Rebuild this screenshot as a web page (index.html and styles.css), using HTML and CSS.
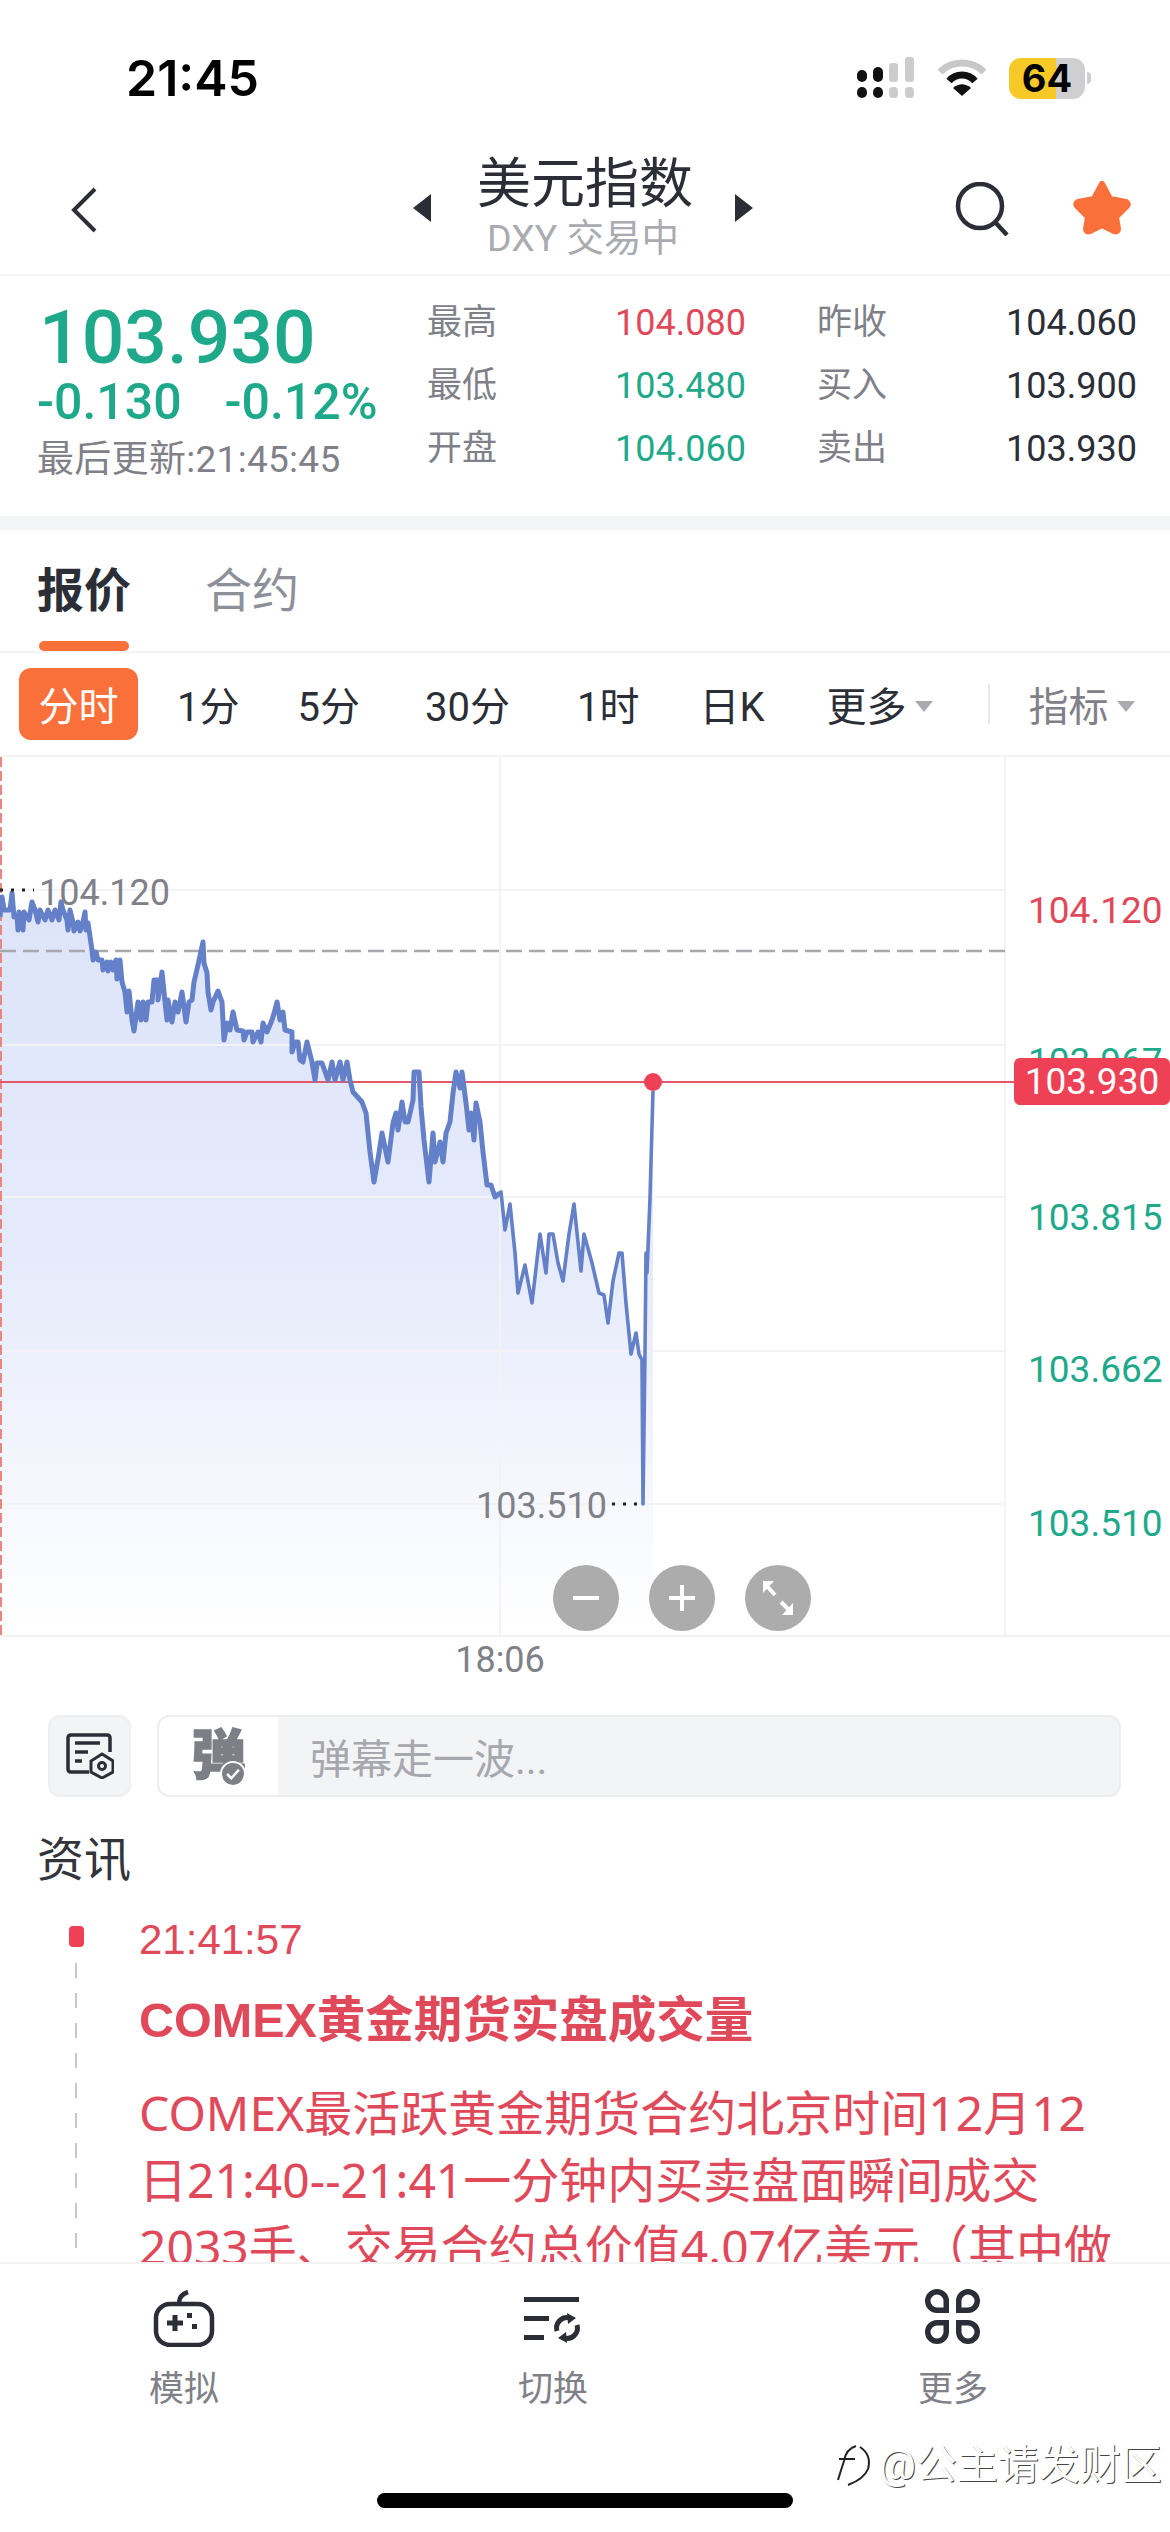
FILE: index.html
```html
<!DOCTYPE html>
<html lang="zh-CN">
<head>
    <meta charset="UTF-8">
    <title>美元指数</title>
    <link rel="stylesheet" href="styles.css">
</head>
<body>

<div class="page">
    <div class="status-bar">
        <span class="clock">21:45</span>
        <div class="status-icons">
            <svg class="signal" width="58" height="42" viewBox="0 0 58 42">
                <rect x="0" y="13" width="10" height="12" rx="5" fill="#111"/>
                <rect x="16" y="10" width="10" height="15" rx="5" fill="#111"/>
                <rect x="0" y="30" width="10" height="11" rx="5" fill="#111"/>
                <rect x="16" y="30" width="10" height="11" rx="5" fill="#111"/>
                <rect x="32" y="6" width="9" height="19" rx="3" fill="#ccc"/>
                <rect x="48" y="0" width="9" height="25" rx="3" fill="#ccc"/>
                <rect x="32" y="30" width="9" height="11" rx="4" fill="#ccc"/>
                <rect x="48" y="30" width="9" height="11" rx="4" fill="#ccc"/>
            </svg>
            <svg class="wifi" width="50" height="38" viewBox="0 0 50 38">
                <path d="M3 13 C15 1 35 1 47 13" fill="none" stroke="#c8c8c8" stroke-width="7"/>
                <path d="M12 22 C19 14 31 14 38 22" fill="none" stroke="#111" stroke-width="7"/>
                <path d="M16 29 C22 24 28 24 34 29 L25 37 Z" fill="#111"/>
            </svg>
            <div class="battery">
                <div class="battery-body"><span>64</span></div>
                <div class="battery-nub"></div>
            </div>
        </div>
    </div>

    <div class="nav-bar">
        <svg class="back" width="28" height="46" viewBox="0 0 28 46"><path d="M25 2 L4 23 L25 44" fill="none" stroke="#2b2e36" stroke-width="4"/></svg>
        <div class="symbol">
            <svg width="18" height="28" viewBox="0 0 18 28"><path d="M18 0 V28 L0 14 Z" fill="#2b2e36"/></svg>
            <div class="symbol-name">
                <div class="symbol-title">美元指数</div>
                <div class="symbol-sub">DXY 交易中</div>
            </div>
            <svg width="18" height="28" viewBox="0 0 18 28"><path d="M0 0 V28 L18 14 Z" fill="#2b2e36"/></svg>
        </div>
        <svg class="search" width="54" height="54" viewBox="0 0 54 54">
            <circle cx="25" cy="24" r="22" fill="none" stroke="#2b2e36" stroke-width="4.5"/>
            <path d="M40 40 L52 53" stroke="#2b2e36" stroke-width="4.5"/>
        </svg>
        <svg class="star" width="60" height="56" viewBox="0 0 60 56">
            <path d="M30 5 L38 20 L54 23 Q57 25 55 27 L44 38 L46 50 Q46 53 42 52 L30 46 L18 52 Q14 53 14 50 L16 38 L5 27 Q3 25 6 23 L22 20 Z" fill="#f9703b" stroke="#f9703b" stroke-width="6" stroke-linejoin="round"/>
        </svg>
    </div>

    <div class="quote">
        <div class="quote-main">
            <div class="price">103.930</div>
            <div class="change"><span>-0.130</span><span>-0.12%</span></div>
            <div class="updated">最后更新:21:45:45</div>
        </div>
        <div class="quote-table">
            <span class="cell-label">最高</span><span class="cell-value up">104.080</span>
            <span class="cell-label">昨收</span><span class="cell-value">104.060</span>
            <span class="cell-label">最低</span><span class="cell-value down">103.480</span>
            <span class="cell-label">买入</span><span class="cell-value">103.900</span>
            <span class="cell-label">开盘</span><span class="cell-value down">104.060</span>
            <span class="cell-label">卖出</span><span class="cell-value">103.930</span>
        </div>
    </div>

    <div class="tabs">
        <div class="tab active">报价</div>
        <div class="tab">合约</div>
    </div>

    <div class="periods">
        <span class="period active">分时</span>
        <span class="period p-1">1分</span>
        <span class="period p-2">5分</span>
        <span class="period p-3">30分</span>
        <span class="period p-4">1时</span>
        <span class="period p-5">日K</span>
        <span class="period p-6">更多<i class="caret"></i></span>
        <span class="period-sep"></span>
        <span class="period muted">指标<i class="caret"></i></span>
    </div>

    <div class="chart">
        <svg class="chart-svg" width="1170" height="880" viewBox="0 757 1170 880">
            <defs>
                <linearGradient id="areaFill" x1="0" y1="0" x2="0" y2="1">
                    <stop offset="0" stop-color="#dde4f9"/>
                    <stop offset="0.5" stop-color="#e6ebfb"/>
                    <stop offset="1" stop-color="#ffffff"/>
                </linearGradient>
            </defs>
            <!-- area under the line, same points as the line below -->
            <path fill="url(#areaFill)" d="M0 917 L2 897 L4 910 L7 910 L10 910 L12 893 L14 917 L17 915 L18 930 L19 912 L23 930 L24 912 L29 920 L32 902 L35 910 L38 922 L40 910 L45 920 L48 910 L52 920 L55 910 L59 920 L61 902 L63 910 L67 920 L68 930 L70 910 L73 922 L74 931 L78 922 L80 931 L83 922 L85 912 L86 930 L88 923 L92 950 L93 960 L96 952 L98 960 L102 960 L103 970 L107 962 L108 971 L111 962 L113 970 L116 960 L117 979 L120 960 L122 982 L125 992 L127 1012 L129 991 L132 1020 L134 1031 L138 1002 L141 1020 L143 1002 L146 1020 L148 1002 L152 1002 L154 980 L158 980 L158 1000 L162 972 L165 1002 L167 1020 L168 1000 L172 1022 L175 1002 L178 1012 L182 992 L186 1022 L189 1002 L192 1000 L194 982 L198 965 L203 942 L204 963 L207 973 L208 992 L211 1010 L213 1002 L218 991 L222 1002 L224 1040 L227 1023 L230 1030 L233 1012 L237 1030 L243 1031 L244 1040 L247 1032 L252 1032 L253 1042 L258 1032 L261 1042 L263 1023 L267 1032 L272 1020 L275 1010 L277 1002 L280 1020 L283 1012 L285 1030 L292 1032 L292 1052 L295 1042 L298 1042 L300 1060 L303 1062 L307 1042 L312 1062 L315 1080 L317 1063 L322 1063 L328 1080 L332 1062 L335 1080 L340 1062 L343 1080 L347 1062 L350 1080 L353 1092 L362 1102 L366 1113 L370 1152 L374 1182 L379 1153 L382 1133 L388 1162 L393 1123 L396 1113 L398 1130 L402 1102 L405 1122 L408 1122 L413 1100 L414 1072 L419 1072 L421 1107 L424 1140 L429 1182 L433 1133 L435 1162 L440 1142 L443 1162 L446 1133 L450 1122 L453 1093 L456 1072 L460 1088 L462 1072 L466 1103 L469 1130 L471 1113 L474 1140 L476 1103 L480 1122 L483 1152 L487 1185 L491 1185 L495 1197 L500 1193 L501 1192 L505 1230 L510 1204 L515 1253 L518 1293 L525 1265 L532 1303 L540 1234 L546 1273 L549 1234 L553 1234 L558 1263 L563 1281 L569 1234 L574 1204 L581 1271 L584 1234 L592 1263 L599 1293 L604 1295 L608 1323 L613 1281 L619 1253 L622 1253 L626 1303 L631 1354 L636 1333 L639 1354 L642 1360 L645 1352 L646 1253 L647 1273 L650 1198 L653 1091 V1636 H0 Z"/>

            <!-- grid -->
            <g stroke="#f3f3f5" stroke-width="2">
                <path d="M0 890 H1005 M0 1045 H1005 M0 1197 H1005 M0 1351 H1005 M0 1504 H1005 M0 1636 H1170"/>
                <path d="M500 757 V1636 M1005 757 V1636"/>
            </g>
            <path d="M1 757 V1636" stroke="#e8867f" stroke-width="2" stroke-dasharray="10 4"/>
            <path d="M0 951 H1005" stroke="#a9a9ad" stroke-width="2.5" stroke-dasharray="16 7"/>
            <path d="M0 1082 H1015" stroke="#e4566a" stroke-width="2"/>

            <!-- price line -->
            <path fill="none" stroke="#6480c8" stroke-width="5" stroke-linejoin="round" d="M0 917 L2 897 L4 910 L7 910 L10 910 L12 893 L14 917 L17 915 L18 930 L19 912 L23 930 L24 912 L29 920 L32 902 L35 910 L38 922 L40 910 L45 920 L48 910 L52 920 L55 910 L59 920 L61 902 L63 910 L67 920 L68 930 L70 910 L73 922 L74 931 L78 922 L80 931 L83 922 L85 912 L86 930 L88 923 L92 950 L93 960 L96 952 L98 960 L102 960 L103 970 L107 962 L108 971 L111 962 L113 970 L116 960 L117 979 L120 960 L122 982 L125 992 L127 1012 L129 991 L132 1020 L134 1031 L138 1002 L141 1020 L143 1002 L146 1020 L148 1002 L152 1002 L154 980 L158 980 L158 1000 L162 972 L165 1002 L167 1020 L168 1000 L172 1022 L175 1002 L178 1012 L182 992 L186 1022 L189 1002 L192 1000 L194 982 L198 965 L203 942 L204 963 L207 973 L208 992 L211 1010 L213 1002 L218 991 L222 1002 L224 1040 L227 1023 L230 1030 L233 1012 L237 1030 L243 1031 L244 1040 L247 1032 L252 1032 L253 1042 L258 1032 L261 1042 L263 1023 L267 1032 L272 1020 L275 1010 L277 1002 L280 1020 L283 1012 L285 1030 L292 1032 L292 1052 L295 1042 L298 1042 L300 1060 L303 1062 L307 1042 L312 1062 L315 1080 L317 1063 L322 1063 L328 1080 L332 1062 L335 1080 L340 1062 L343 1080 L347 1062 L350 1080 L353 1092 L362 1102 L366 1113 L370 1152 L374 1182 L379 1153 L382 1133 L388 1162 L393 1123 L396 1113 L398 1130 L402 1102 L405 1122 L408 1122 L413 1100 L414 1072 L419 1072 L421 1107 L424 1140 L429 1182 L433 1133 L435 1162 L440 1142 L443 1162 L446 1133 L450 1122 L453 1093 L456 1072 L460 1088 L462 1072 L466 1103 L469 1130 L471 1113 L474 1140 L476 1103 L480 1122 L483 1152 L487 1185 L491 1185 L495 1197 L500 1193"/>
            <path fill="none" stroke="#6480c8" stroke-width="3.6" stroke-linejoin="round" d="M500 1193 L501 1192 L505 1230 L510 1204 L515 1253 L518 1293 L525 1265 L532 1303 L540 1234 L546 1273 L549 1234 L553 1234 L558 1263 L563 1281 L569 1234 L574 1204 L581 1271 L584 1234 L592 1263 L599 1293 L604 1295 L608 1323 L613 1281 L619 1253 L622 1253 L626 1303 L631 1354 L636 1333 L639 1354 L642 1360 L643 1504 L645 1352 L646 1253 L647 1273 L650 1198 L653 1091"/>

            <circle cx="653" cy="1082" r="9" fill="#ee4156"/>
            <path d="M0 890 H34 M612 1504 H645" stroke="#222" stroke-width="3" stroke-dasharray="3 8"/>
        </svg>

        <span class="mark mark-high">104.120</span>
        <span class="mark mark-low">103.510</span>

        <span class="axis axis-1 up">104.120</span>
        <span class="axis axis-2 down">103.967</span>
        <span class="axis axis-3 down">103.815</span>
        <span class="axis axis-4 down">103.662</span>
        <span class="axis axis-5 down">103.510</span>
        <span class="price-tag">103.930</span>

        <div class="zoom-btns">
            <span class="zoom-btn"><svg width="30" height="30" viewBox="0 0 30 30"><path d="M2 15 H28" stroke="#fff" stroke-width="4"/></svg></span>
            <span class="zoom-btn"><svg width="30" height="30" viewBox="0 0 30 30"><path d="M2 15 H28 M15 2 V28" stroke="#fff" stroke-width="4"/></svg></span>
            <span class="zoom-btn"><svg width="34" height="38" viewBox="0 0 34 38"><path d="M5 6 L14 16 M20 23 L29 32" stroke="#fff" stroke-width="4"/><path d="M2 2 H13 L2 14 Z M32 36 H21 L32 24 Z" fill="#fff"/></svg></span>
        </div>
    </div>

    <div class="time-axis">18:06</div>

    <div class="danmu">
        <div class="danmu-set">
            <svg width="48" height="46" viewBox="0 0 48 46" fill="none" stroke="#2b2e36" stroke-width="3.5">
                <path d="M23 39 H5 Q2 39 2 36 V5 Q2 2 5 2 H41 Q44 2 44 5 V19"/>
                <path d="M9 10 H34 M9 19 H22 M9 28 H16"/>
                <path d="M36 21 L47 28 V39 L36 45 L25 39 V28 Z" stroke-width="3"/>
                <circle cx="36" cy="33" r="3.5" stroke-width="3"/>
            </svg>
        </div>
        <div class="danmu-input">
            <div class="danmu-switch">
                <span class="danmu-char">弹</span>
                <svg class="danmu-check" width="26" height="26" viewBox="0 0 26 26"><circle cx="13" cy="13" r="13" fill="#7d7f86"/><path d="M6 13 L11 18 L20 8" fill="none" stroke="#fff" stroke-width="3"/></svg>
            </div>
            <span class="danmu-hint">弹幕走一波...</span>
        </div>
    </div>

    <div class="news">
        <div class="news-head">资讯</div>
        <div class="news-item">
            <div class="timeline">
                <span class="timeline-dot"></span>
                <span class="timeline-line"></span>
            </div>
            <div class="news-body">
                <div class="news-time">21:41:57</div>
                <div class="news-title">COMEX黄金期货实盘成交量</div>
                <p class="news-text">COMEX最活跃黄金期货合约北京时间12月12<br>日21:40--21:41一分钟内买卖盘面瞬间成交<br>2033手、交易合约总价值4.07亿美元（其中做</p>
            </div>
        </div>
    </div>

    <div class="bottom-bar">
        <div class="bottom-item">
            <svg width="64" height="58" viewBox="0 0 64 58" fill="none" stroke="#2b2e36">
                <rect x="4" y="15" width="56" height="41" rx="14" stroke-width="4.5"/>
                <path d="M27 14 Q27 6 36 3" stroke-width="4.5"/>
                <path d="M15 34 H31 M23 26 V42" stroke-width="5"/>
                <path d="M35 26.500 H40 M40 37.500 H45" stroke-width="5"/>
            </svg>
            <span>模拟</span>
        </div>
        <div class="bottom-item">
            <svg width="60" height="58" viewBox="0 0 60 58" fill="none" stroke="#2b2e36">
                <path d="M1 10.500 H56 M1 29.500 H26 M1 48.500 H21" stroke-width="5"/>
                <path d="M34 42 A10.500 10.500 0 0 1 46 28.700" stroke-width="5"/>
                <path d="M54 36 A10.500 10.500 0 0 1 42 49.300" stroke-width="5"/>
                <path d="M44 24 L53 29 L45 35 Z M44 54 L35 49 L43 43 Z" fill="#2b2e36" stroke="none"/>
            </svg>
            <span>切换</span>
        </div>
        <div class="bottom-item">
            <svg width="56" height="58" viewBox="0 0 56 58" fill="none" stroke="#2b2e36" stroke-width="5.500">
                <path d="M21.250 21.250 H12 A9.250 9.250 0 1 1 21.250 12 Z"/>
                <path d="M33.750 21.250 H43 A9.250 9.250 0 1 0 33.750 12 Z"/>
                <path d="M21.250 33.750 H12 A9.250 9.250 0 1 0 21.250 43 Z"/>
                <path d="M33.750 33.750 H43 A9.250 9.250 0 1 1 33.750 43 Z"/>
            </svg>
            <span>更多</span>
        </div>
    </div>

    <div class="watermark">
        <svg width="38" height="44" viewBox="0 0 38 44" fill="none" stroke="#222" stroke-width="2"><path d="M2 37 Q6 24 8 18 Q10 6 20 3 M3 16 H19 M24 4 Q36 12 32 26 Q28 36 12 42"/></svg>
        <span>@公主请发财区</span>
    </div>

    <div class="home-indicator"></div>
</div>

</body>
</html>
```

FILE: styles.css
```css
* {
    box-sizing: border-box;
}
html, body {
    margin: 0;
    padding: 0;
}
body {
    background-color: #fff;
    font-family: "Roboto", "Noto Sans CJK SC", sans-serif;
    color: #2b2e36;
}
.page {
    position: relative;
    width: 1170px;
    height: 2532px;
    overflow: hidden;
    display: flex;
    flex-direction: column;
}

/* status bar */
.status-bar {
    height: 140px;
    flex: none;
    display: flex;
    justify-content: space-between;
    align-items: flex-start;
    padding: 50px 79px 0 126px;
}
.clock {
    font-family: "Inter", sans-serif;
    font-size: 50px;
    line-height: 56px;
    font-weight: 600;
    color: #000;
}
.status-icons {
    display: flex;
    align-items: center;
    gap: 22px;
    margin-top: 7px;
}
.battery {
    display: flex;
    align-items: center;
    gap: 2px;
}
.battery-body {
    width: 76px;
    height: 41px;
    border-radius: 12px;
    background: linear-gradient(90deg, #f6c926 62%, #cfcfd1 62%);
    text-align: center;
    font-family: "Inter", sans-serif;
    font-weight: 700;
    font-size: 38px;
    line-height: 41px;
    color: #000;
}
.battery-nub {
    width: 4px;
    height: 12px;
    border-radius: 0 4px 4px 0;
    background-color: #cfcfd1;
}

/* title row */
.nav-bar {
    position: relative;
    height: 136px;
    flex: none;
    border-bottom: 2px solid #f3f4f6;
    display: flex;
    align-items: flex-start;
}
.back {
    margin: 47px 0 0 70px;
}
.symbol {
    margin-left: 315px;
    display: flex;
    align-items: flex-start;
    gap: 46px;
}
.symbol svg {
    margin-top: 54px;
}
.symbol-name {
    text-align: center;
    width: 212px;
}
.symbol-title {
    font-size: 54px;
    line-height: 66px;
    margin-top: 12px;
    color: #2b2e36;
    white-space: nowrap;
}
.symbol-sub {
    font-size: 37.5px;
    line-height: 42px;
    margin-top: -1px;
    color: #aaabb1;
    white-space: nowrap;
}
.search {
    margin: 42px 0 0 202px;
}
.star {
    margin: 39px 0 0 63px;
}

/* quote block */
.quote {
    height: 254px;
    flex: none;
    display: flex;
    padding: 0 37px;
    border-bottom: 14px solid #f4f5f7;
}
.quote-main {
    width: 390px;
    flex: none;
}
.price {
    font-size: 75px;
    line-height: 80px;
    font-weight: 500;
    color: #1fa98b;
    margin-top: 21px;
    margin-left: 2px;
}
.change {
    display: flex;
    gap: 43px;
    font-size: 50px;
    line-height: 50px;
    font-weight: 500;
    color: #1fa98b;
}
.updated {
    font-size: 37px;
    line-height: 44px;
    letter-spacing: 0.3px;
    color: #808088;
    margin-top: 11px;
    white-space: nowrap;
}
.quote-table {
    flex: 1;
    display: grid;
    grid-template-columns: 188px 202px 189px 1fr;
    grid-auto-rows: 63px;
    padding-top: 15px;
    align-items: center;
}
.cell-label {
    font-size: 35px;
    line-height: 42px;
    color: #808088;
}
.cell-value {
    font-size: 36px;
    line-height: 42px;
    color: #2b2e36;
}
.up {
    color: #e0495a;
}
.down {
    color: #1fa98b;
}

/* tabs */
.tabs {
    height: 123px;
    flex: none;
    display: flex;
    gap: 74px;
    padding-left: 37px;
    border-bottom: 2px solid #f3f4f6;
}
.tab {
    position: relative;
    font-size: 47px;
    line-height: 56px;
    padding-top: 33px;
    color: #8e9099;
    width: 94px;
}
.tab.active {
    font-weight: 700;
    color: #2b2e36;
}
.tab.active::after {
    content: "";
    position: absolute;
    left: 2px;
    right: 2px;
    bottom: 0;
    height: 10px;
    border-radius: 5px;
    background-color: #f9703b;
}

/* period row */
.periods {
    height: 104px;
    flex: none;
    display: flex;
    align-items: center;
    padding-left: 19px;
    border-bottom: 2px solid #f3f4f6;
    font-size: 40px;
    white-space: nowrap;
}
.period {
    display: flex;
    align-items: center;
    color: #2b2e36;
}
.period.active {
    width: 119px;
    height: 72px;
    justify-content: center;
    border-radius: 12px;
    background-color: #f9703b;
    color: #fff;
}
.p-1 { margin-left: 39px; }
.p-2 { margin-left: 58px; }
.p-3 { margin-left: 65px; }
.p-4 { margin-left: 67px; }
.p-5 { margin-left: 60px; }
.p-6 { margin-left: 62px; }
.period.muted {
    color: #808088;
    margin-left: 39px;
}
.caret {
    margin-left: 8px;
    margin-top: 4px;
    width: 0;
    height: 0;
    border-left: 9px solid transparent;
    border-right: 9px solid transparent;
    border-top: 11px solid #a9abb1;
}
.period-sep {
    width: 2px;
    height: 40px;
    margin-left: 55px;
    background-color: #e8e8ea;
}

/* chart */
.chart {
    position: relative;
    height: 880px;
    flex: none;
}
.chart-svg {
    display: block;
}
.mark {
    position: absolute;
    font-size: 36px;
    line-height: 40px;
    color: #808088;
}
.mark-high { left: 39px; top: 116px; }
.mark-low { left: 476px; top: 729px; }
.axis {
    position: absolute;
    left: 1028px;
    font-size: 37px;
    line-height: 44px;
}
.axis-1 { top: 132px; }
.axis-2 { top: 283px; }
.axis-3 { top: 439px; }
.axis-4 { top: 591px; }
.axis-5 { top: 745px; }
.price-tag {
    position: absolute;
    left: 1014px;
    top: 301px;
    width: 156px;
    height: 47px;
    border-radius: 6px;
    background-color: #ee4156;
    color: #fff;
    font-size: 37px;
    line-height: 47px;
    text-align: center;
}
.zoom-btns {
    position: absolute;
    left: 553px;
    top: 808px;
    display: flex;
    gap: 30px;
}
.zoom-btn {
    width: 66px;
    height: 66px;
    border-radius: 50%;
    background-color: #acacac;
    display: flex;
    align-items: center;
    justify-content: center;
}

.time-axis {
    height: 52px;
    flex: none;
    text-align: center;
    padding-right: 170px;
    font-size: 36px;
    line-height: 46px;
    color: #808088;
}

/* danmu input */
.danmu {
    height: 82px;
    margin: 26px 49px 0 48px;
    flex: none;
    display: flex;
    gap: 26px;
}
.danmu-set {
    width: 83px;
    border-radius: 12px;
    background-color: #f3f4f6;
    border: 2px solid #eeeff1;
    display: flex;
    align-items: center;
    justify-content: center;
}
.danmu-input {
    flex: 1;
    display: flex;
    align-items: center;
    border-radius: 12px;
    background-color: #f3f4f6;
    border: 2px solid #eceef0;
}
.danmu-switch {
    position: relative;
    width: 119px;
    height: 78px;
    border-radius: 12px 0 0 12px;
    background-color: #fff;
    text-align: center;
}
.danmu-char {
    display: block;
    font-size: 54px;
    line-height: 80px;
    font-weight: 900;
    color: #7d7f86;
    -webkit-text-stroke: 1.5px #7d7f86;
}
.danmu-check {
    position: absolute;
    right: 32px;
    bottom: 8px;
    border: 2px solid #fff;
    border-radius: 50%;
}
.danmu-hint {
    margin-left: 32px;
    font-size: 41px;
    color: #a7a8ae;
}

/* news */
.news {
    flex: 1;
    min-height: 0;
    overflow: hidden;
    padding: 35px 20px 0 37px;
}
.news-head {
    font-size: 47px;
    line-height: 56px;
    color: #33353b;
}
.news-item {
    display: flex;
    margin-top: 32px;
}
.timeline {
    width: 102px;
    flex: none;
    display: flex;
    flex-direction: column;
    align-items: flex-start;
    padding-left: 32px;
}
.timeline-dot {
    width: 15px;
    height: 21px;
    margin-top: 6px;
    border-radius: 4px;
    background-color: #ee4156;
}
.timeline-line {
    width: 2px;
    height: 300px;
    margin: 16px 0 0 6px;
    background: repeating-linear-gradient(180deg, #c8c8c8 0, #c8c8c8 15px, transparent 15px, transparent 30px);
}
.news-body {
    flex: 1;
    color: #e0495a;
    font-family: "Liberation Sans", "Noto Sans CJK SC", sans-serif;
}
.news-time {
    font-size: 42px;
    line-height: 40px;
}
.news-title {
    font-size: 48.5px;
    line-height: 60px;
    font-weight: 700;
    margin-top: 30px;
    white-space: nowrap;
}
.news-text {
    margin: 29px 0 0;
    font-family: "Noto Sans", "Noto Sans CJK SC", sans-serif;
    font-size: 48px;
    line-height: 67px;
    white-space: nowrap;
}

/* bottom bar */
.bottom-bar {
    height: 270px;
    flex: none;
    background-color: #fff;
    border-top: 2px solid #f3f4f6;
    position: relative;
}
.bottom-item {
    position: absolute;
    top: 25px;
    width: 120px;
    display: flex;
    flex-direction: column;
    align-items: center;
    font-size: 35px;
    line-height: 42px;
    color: #808088;
}
.bottom-item:nth-child(1) { left: 124px; }
.bottom-item:nth-child(2) { left: 493px; }
.bottom-item:nth-child(3) { left: 893px; }
.bottom-item svg {
    margin-bottom: 22px;
}

.watermark {
    position: absolute;
    left: 836px;
    top: 2440px;
    display: flex;
    align-items: center;
    gap: 5px;
    font-size: 41px;
    line-height: 50px;
    color: #fff;
    text-shadow: 1px 1px 0 #444;
    white-space: nowrap;
}
.home-indicator {
    position: absolute;
    left: 377px;
    top: 2493px;
    width: 416px;
    height: 15px;
    border-radius: 8px;
    background-color: #000;
}
```
